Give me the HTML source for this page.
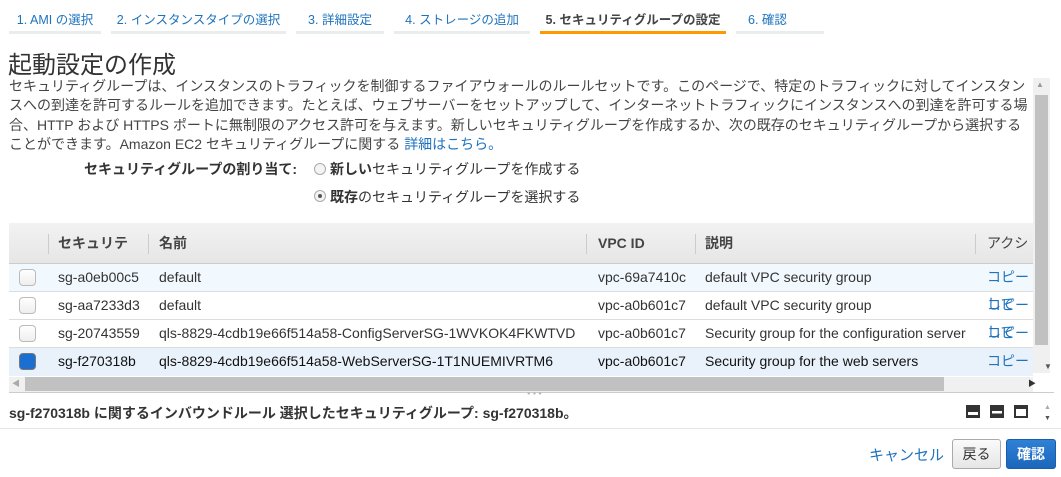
<!DOCTYPE html>
<html><head><meta charset="utf-8"><style>
*{margin:0;padding:0;box-sizing:border-box}
body{width:1061px;height:477px;background:#fff;font-family:Arial,"Liberation Sans","Noto Sans CJK JP",sans-serif;color:#333;position:relative;overflow:hidden;font-size:14px}
.a{position:absolute;white-space:nowrap}
.tab{position:absolute;top:10px;height:24px;border-bottom:3px solid #eaeded;font-size:12.5px;color:#1e73be;text-align:center;line-height:20px}
.tab.on{border-bottom-color:#ff9900;color:#444;font-weight:bold}
.row{position:absolute;left:9px;width:1031px;height:28px;border-bottom:1px solid #ddd;font-size:14px;line-height:27px}
.row span{position:absolute;top:0}
.cb{position:absolute;left:10px;top:5px;width:17px;height:17px;border:1px solid #bbb;border-radius:4px;background:linear-gradient(#fff,#eee)}
.hd{position:absolute;top:0;height:41px;line-height:41px}
.sep{position:absolute;top:11px;width:1px;height:20px;background:#ccc}
.ic{position:absolute;top:405px;width:14px;height:13px;border:2px solid #333;background:#fff}
</style></head><body>
<div class="tab" style="left:9px;width:92px">1. AMI の選択</div>
<div class="tab" style="left:111px;width:175px">2. インスタンスタイプの選択</div>
<div class="tab" style="left:296px;width:88px">3. 詳細設定</div>
<div class="tab" style="left:394px;width:136px">4. ストレージの追加</div>
<div class="tab on" style="left:540px;width:186px">5. セキュリティグループの設定</div>
<div class="tab" style="left:736px;width:88px;text-align:left;padding-left:12px">6. 確認</div>

<div class="a" style="left:8px;top:45px;font-size:24px;color:#333">起動設定の作成</div>
<div class="a" style="left:9px;top:77px;font-size:14px;line-height:19.3px;color:#444">セキュリティグループは、インスタンスのトラフィックを制御するファイアウォールのルールセットです。このページで、特定のトラフィックに対してインスタン<br>スへの到達を許可するルールを追加できます。たとえば、ウェブサーバーをセットアップして、インターネットトラフィックにインスタンスへの到達を許可する場<br>合、HTTP および HTTPS ポートに無制限のアクセス許可を与えます。新しいセキュリティグループを作成するか、次の既存のセキュリティグループから選択する<br>ことができます。Amazon EC2 セキュリティグループに関する <span style="color:#1e73be">詳細はこちら。</span></div>

<div style="position:absolute;left:1033px;top:78px;width:17px;height:295px;background:#f0f0f0"></div>
<div style="position:absolute;left:1035px;top:95px;width:13px;height:250px;background:#c1c1c1"></div>
<div class="a" style="left:1036px;top:80px;font-size:8px;color:#999">▲</div>
<div class="a" style="left:1044px;top:362px;font-size:8px;color:#555">▼</div>

<div class="a" style="left:84px;top:159px;font-weight:bold;font-size:14px">セキュリティグループの割り当て:</div>
<div class="a" style="left:314px;top:163px;width:12px;height:12px;border:1px solid #aaa;border-radius:50%;background:#f4f4f4"></div>
<div class="a" style="left:330px;top:159px;font-size:14px"><b>新しい</b>セキュリティグループを作成する</div>
<div class="a" style="left:314px;top:190px;width:12px;height:12px;border:1px solid #aaa;border-radius:50%;background:#f4f4f4"><div style="position:absolute;left:3px;top:3px;width:4px;height:4px;border-radius:50%;background:#555"></div></div>
<div class="a" style="left:330px;top:187px;font-size:14px"><b>既存</b>のセキュリティグループを選択する</div>

<div style="position:absolute;left:9px;top:223px;width:1024px;height:41px;background:linear-gradient(#f2f2f2,#e6e6e6);border-bottom:1px solid #ccc;font-weight:bold;font-size:14px;color:#444;overflow:hidden">
<div class="sep" style="left:39px"></div><span class="hd" style="left:49px">セキュリテ</span>
<div class="sep" style="left:139px"></div><span class="hd" style="left:150px">名前</span>
<div class="sep" style="left:577px"></div><span class="hd" style="left:589px">VPC ID</span>
<div class="sep" style="left:686px"></div><span class="hd" style="left:696px">説明</span>
<div class="sep" style="left:966px"></div><span class="hd" style="left:978px;font-weight:normal">アクション</span>
</div>
<div style="position:absolute;left:9px;top:264px;width:1024px;height:113px;overflow:hidden">
<div class="row" style="top:0;left:0;background:#f1f8fe"><div class="cb"></div><span style="left:49px">sg-a0eb00c5</span><span style="left:150px">default</span><span style="left:589px">vpc-69a7410c</span><span style="left:696px">default VPC security group</span><span style="left:978px;color:#1e73be">コピーして</span></div>
<div class="row" style="top:28px;left:0"><div class="cb"></div><span style="left:49px">sg-aa7233d3</span><span style="left:150px">default</span><span style="left:589px">vpc-a0b601c7</span><span style="left:696px">default VPC security group</span><span style="left:978px;color:#1e73be">コピーして</span></div>
<div class="row" style="top:56px;left:0"><div class="cb"></div><span style="left:49px">sg-20743559</span><span style="left:150px">qls-8829-4cdb19e66f514a58-ConfigServerSG-1WVKOK4FKWTVD</span><span style="left:589px">vpc-a0b601c7</span><span style="left:696px">Security group for the configuration server</span><span style="left:978px;color:#1e73be">コピーして</span></div>
<div class="row" style="top:84px;left:0;background:#e9f2fb;color:#111;border:0"><div class="cb" style="background:#1a6fd0;border-color:#777"></div><span style="left:49px">sg-f270318b</span><span style="left:150px">qls-8829-4cdb19e66f514a58-WebServerSG-1T1NUEMIVRTM6</span><span style="left:589px">vpc-a0b601c7</span><span style="left:696px">Security group for the web servers</span><span style="left:978px;color:#1e73be">コピーして</span></div>
</div>
<div style="position:absolute;left:9px;top:377px;width:1024px;height:15px;background:#f0f0f0"></div>
<div style="position:absolute;left:25px;top:377px;width:919px;height:14px;background:#c1c1c1"></div>
<div class="a" style="left:12px;top:378px;font-size:8px;color:#aaa">◀</div>
<div class="a" style="left:1028px;top:378px;font-size:8px;color:#333">▶</div>
<div style="position:absolute;left:9px;top:392px;width:1045px;height:1px;background:#ccc"></div>
<div class="a" style="left:527px;top:391px;font-size:6px;color:#bbb;letter-spacing:2px">●●●</div>

<div class="a" style="left:9px;top:403px;font-weight:bold;font-size:14px">sg-f270318b に関するインバウンドルール 選択したセキュリティグループ: sg-f270318b。</div>
<div class="ic" style="left:966px;background:#333;border-bottom:3px solid #333;box-shadow:inset 0 -3px 0 #fff"></div>
<div class="ic" style="left:990px;background:linear-gradient(#333 45%,#fff 45%,#fff 70%,#333 70%)"></div>
<div class="ic" style="left:1014px;border-top-width:4px"></div>
<div class="a" style="left:1044px;top:404px;font-size:7px;color:#aaa">▲</div>
<div class="a" style="left:1044px;top:415px;font-size:7px;color:#555">▼</div>
<div style="position:absolute;left:0;top:428px;width:1061px;height:1px;background:#e6e6e6"></div>

<div class="a" style="left:869px;top:444px;font-size:15px;color:#1e73be">キャンセル</div>
<div class="a" style="left:952px;top:439px;width:49px;height:30px;border:1px solid #aaa;border-radius:3px;background:linear-gradient(#fafafa,#e6e6e6);font-size:14px;line-height:28px;text-align:center;color:#333">戻る</div>
<div class="a" style="left:1006px;top:439px;width:50px;height:30px;border:1px solid #1a5da8;border-radius:3px;background:linear-gradient(#2f82d6,#1c66bb);font-size:14px;line-height:28px;text-align:center;color:#fff;font-weight:bold">確認</div>
</body></html>
